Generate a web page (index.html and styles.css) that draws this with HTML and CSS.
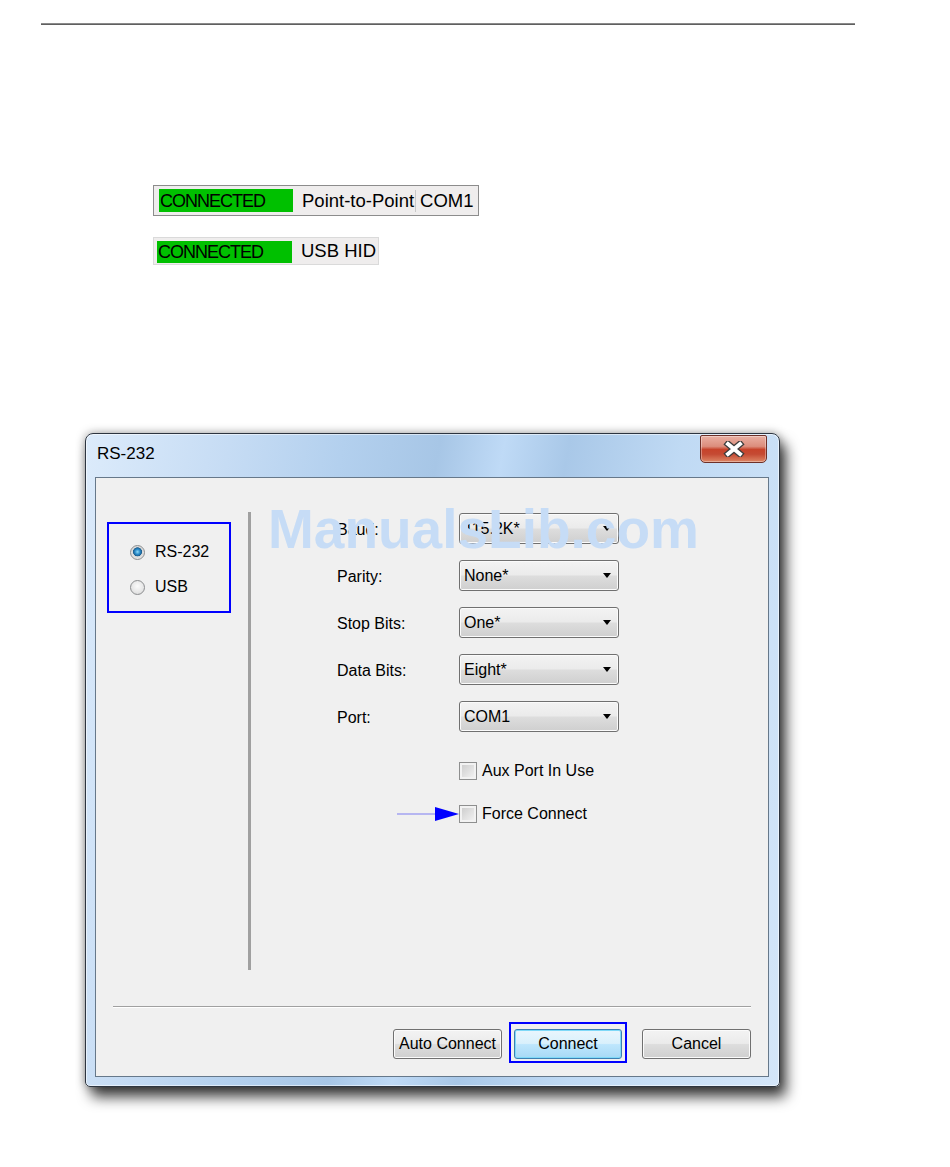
FILE: index.html
```html
<!DOCTYPE html>
<html lang="en">
<head>
  <meta charset="UTF-8">
  <title>RS-232</title>
  <link rel="stylesheet" href="styles.css">
</head>
<body>
  <div class="rule"></div>

  <!-- barras de estado -->
  <div class="status status-com">
    <span class="state">CONNECTED</span>
    <span class="link">Point-to-Point</span>
    <span class="port">COM1</span>
  </div>
  <div class="status status-usb">
    <span class="state">CONNECTED</span>
    <span class="link">USB HID</span>
  </div>

  <!-- janela RS-232 -->
  <div class="dialog">
    <div class="titlebar">
      <span class="title">RS-232</span>
      <button class="close">
        <svg width="24" height="16" viewBox="0 0 24 16">
          <path d="M6 3 L18 13 M18 3 L6 13" stroke="#3b3b3b" stroke-width="6.5" stroke-linecap="square" fill="none"/>
          <path d="M6 3 L18 13 M18 3 L6 13" stroke="#fff" stroke-width="4" stroke-linecap="square" fill="none"/>
        </svg>
      </button>
    </div>

    <div class="panel">
      <div class="main">
        <div class="side">
          <div class="mode-box">
            <label class="radio-row"><span class="radio on"></span>RS-232</label>
            <label class="radio-row"><span class="radio"></span>USB</label>
          </div>
        </div>
        <div class="divider"></div>
        <div class="settings">
          <div class="fields">
            <span class="label">Baud:</span>
            <div class="combo">115.2K*</div>
            <span class="label">Parity:</span>
            <div class="combo">None*</div>
            <span class="label">Stop Bits:</span>
            <div class="combo">One*</div>
            <span class="label">Data Bits:</span>
            <div class="combo">Eight*</div>
            <span class="label">Port:</span>
            <div class="combo">COM1</div>
          </div>
          <label class="check-row"><span class="check"></span>Aux Port In Use</label>
          <label class="check-row force">
            <svg class="pointer" width="62" height="14" viewBox="0 0 62 14">
              <line x1="0" y1="7" x2="40" y2="7" stroke="#7c7cf2" stroke-width="1"/>
              <polygon points="38,0 62,7 38,14" fill="#0000ff"/>
            </svg>
            <span class="check"></span>Force Connect
          </label>
        </div>
      </div>

      <div class="separator"></div>

      <div class="buttons">
        <button class="btn">Auto Connect</button>
        <span class="focus-ring"><button class="btn btn-default">Connect</button></span>
        <button class="btn btn-cancel">Cancel</button>
      </div>
    </div>

    <div class="watermark">ManualsLib.com</div>
  </div>
</body>
</html>
```

FILE: styles.css
```css
body {
  margin: 0;
  padding-bottom: 60px;
  background: #fff;
  color: #000;
  font-family: "Liberation Sans", Arial, sans-serif;
}

.rule {
  margin: 23px 0 0 41px;
  width: 814px;
  height: 2px;
  background: linear-gradient(#a0a0a0, #4a4a4a);
}

/* barras de estado */
.status {
  display: flex;
  align-items: center;
  width: fit-content;
  margin-left: 153px;
  background: #efeded;
}

.status-com {
  margin-top: 160px;
  height: 29px;
  padding: 0 4px 0 5px;
  border: 1px solid #8c8c8c;
}

.status-usb {
  margin-top: 21px;
  height: 26px;
  padding: 0 2px 0 3px;
  border: 1px solid #dadada;
}

.state {
  display: flex;
  align-items: center;
  width: 134px;
  height: 23px;
  padding: 1px 0 0 1px;
  box-sizing: border-box;
  background: #00c000;
  font-size: 18px;
  letter-spacing: -1px;
}

.status-usb .state {
  height: 22px;
  margin-top: 1px;
  width: 135px;
}

.link {
  margin-left: 9px;
  font-size: 18.5px;
}

.status-com .link {
  padding-right: 1px;
  border-right: 1px solid #c9c9c9;
}

.port {
  padding-left: 4px;
  font-size: 18.5px;
}

/* janela */
.dialog {
  position: relative;
  width: 693px;
  height: 652px;
  margin: 168px 0 0 85px;
  border: 1px solid #2d3540;
  border-radius: 8px 8px 5px 5px;
  background: linear-gradient(100deg, #dcebfb 0%, #c6dcf4 18%, #b3d0ee 32%, #a7c6e6 44%, #bfdaf6 52%, #a9c8e8 60%, #c0daf4 74%, #d4e6f9 100%);
  box-shadow: 6px 10px 14px rgba(0, 0, 0, 0.75), 0 0 10px rgba(0, 0, 0, 0.35), inset 0 0 0 1px rgba(255, 255, 255, 0.55);
}

.titlebar {
  display: flex;
  align-items: flex-start;
  justify-content: space-between;
  height: 43px;
  padding: 0 12px 0 11px;
}

.title {
  margin-top: 11px;
  font-size: 17px;
  line-height: 18px;
}

.close {
  display: flex;
  align-items: center;
  justify-content: center;
  width: 67px;
  height: 28px;
  margin-top: 1px;
  padding: 0;
  border: 1px solid #6e3028;
  border-radius: 2px 2px 5px 5px;
  background: linear-gradient(#eab0a3 0%, #dc8d7c 40%, #c7432b 52%, #c54a33 70%, #dd8766 100%);
  box-shadow: inset 0 0 0 1px rgba(255, 255, 255, 0.35);
}

.panel {
  display: flex;
  flex-direction: column;
  width: 672px;
  height: 598px;
  margin-left: 9px;
  border: 1px solid #66788a;
  background: #f0f0f0;
}

.main {
  display: flex;
  height: 458px;
  margin-top: 34px;
}

.side {
  width: 152px;
}

.mode-box {
  display: flex;
  flex-direction: column;
  gap: 15px;
  width: 120px;
  height: 87px;
  margin: 10px 0 0 11px;
  border: 2px solid #0000ff;
}

.radio-row {
  display: flex;
  align-items: center;
  gap: 10px;
  height: 20px;
  padding-left: 21px;
  font-size: 16px;
}

.radio-row:first-child {
  margin-top: 18px;
}

.radio {
  width: 13px;
  height: 13px;
  border: 1px solid #8b8d8f;
  border-radius: 50%;
  background: radial-gradient(circle at 50% 40%, #fbfbfb 0, #e6e6e6 60%, #d0d0d0 100%);
}

.radio.on {
  background: radial-gradient(circle at 50% 45%, #8fdaf7 0, #2a8ccb 2.5px, #1c5e8e 4.2px, #d8d8d8 4.8px, #f7f7f7 100%);
}

.divider {
  width: 3px;
  background: #a0a0a0;
}

.settings {
  display: flex;
  flex-direction: column;
  padding: 1px 0 0 86px;
}

.fields {
  display: grid;
  grid-template-columns: 122px 160px;
  grid-auto-rows: 31px;
  row-gap: 16px;
  align-items: center;
  font-size: 16px;
}

.label {
  padding-top: 3px;
}

.combo {
  position: relative;
  display: flex;
  align-items: center;
  height: 29px;
  padding-left: 4px;
  border: 1px solid #707070;
  border-radius: 3px;
  background: linear-gradient(#f3f3f3 0%, #ebebeb 48%, #dddddd 52%, #cfcfcf 100%);
  box-shadow: inset 0 0 0 1px #fbfbfb;
}

.combo::after {
  content: "";
  position: absolute;
  right: 7px;
  top: 12px;
  border-left: 4.5px solid transparent;
  border-right: 4.5px solid transparent;
  border-top: 5px solid #000;
}

.check-row {
  position: relative;
  display: flex;
  align-items: center;
  gap: 5px;
  height: 18px;
  margin-left: 122px;
  font-size: 16px;
}

.check-row:first-of-type {
  margin-top: 30px;
}

.check-row.force {
  margin-top: 25px;
}

.check {
  width: 16px;
  height: 16px;
  border: 1px solid #8e8f8f;
  background: linear-gradient(135deg, #c9c9c9, #f6f6f6);
  box-shadow: inset 0 0 0 2px #f2f2f2;
}

.pointer {
  position: absolute;
  left: -62px;
  top: 2px;
}

.separator {
  margin: 36px 17px 0 17px;
  border-top: 1px solid #a0a0a0;
  border-bottom: 1px solid #fff;
}

.buttons {
  display: flex;
  justify-content: flex-end;
  align-items: flex-start;
  margin-top: 14px;
  padding-right: 17px;
}

.btn {
  width: 109px;
  height: 30px;
  margin-top: 7px;
  padding: 0;
  border: 1px solid #707070;
  border-radius: 3px;
  background: linear-gradient(#f3f3f3 0%, #ebebeb 48%, #dddddd 52%, #cfcfcf 100%);
  box-shadow: inset 0 0 0 1px #fbfbfb;
  font-family: "Liberation Sans", Arial, sans-serif;
  font-size: 16px;
  color: #000;
}

.focus-ring {
  display: flex;
  margin-left: 7px;
  padding: 5px 3px 2px 3px;
  border: 2px solid #0000ff;
}

.btn-default {
  width: 108px;
  margin-top: 0;
  border-color: #3c7fb1;
  background: linear-gradient(#eaf6fd 0%, #d9f0fc 48%, #bee6fd 52%, #a7d9f5 100%);
  box-shadow: inset 0 0 0 1px #7fd9f8;
}

.btn-cancel {
  margin-left: 15px;
}

.watermark {
  position: absolute;
  left: 182px;
  top: 68px;
  font-size: 55px;
  line-height: 55px;
  font-weight: bold;
  color: #c6dcf6;
  white-space: nowrap;
}
```
